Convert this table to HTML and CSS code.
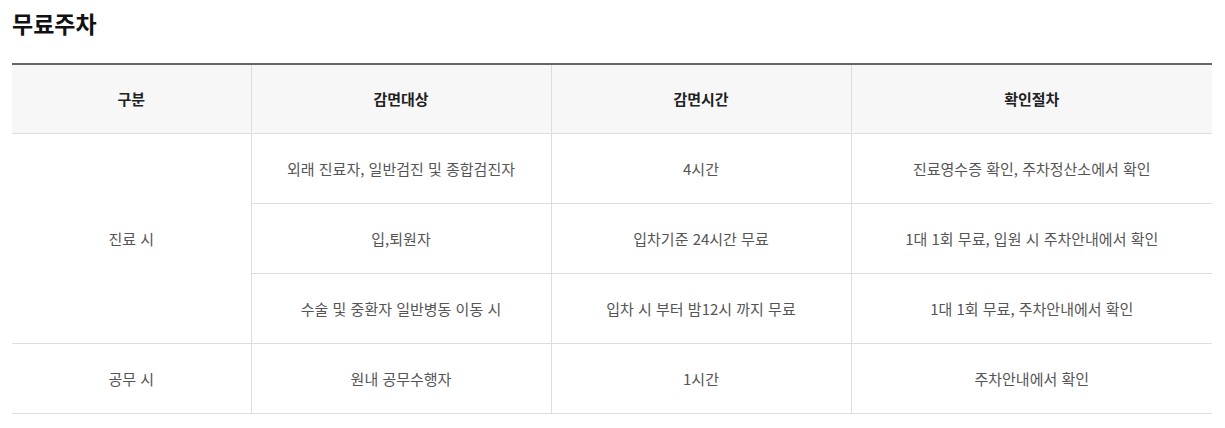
FILE: index.html
```html
<!DOCTYPE html>
<html lang="ko">
<head>
<meta charset="utf-8">
<title>무료주차</title>
<link rel="stylesheet" href="styles.css">
</head>
<body>
<div class="page">
  <h2 class="title">무료주차</h2>
  <table class="park">
    <colgroup>
      <col class="c1"><col class="c2"><col class="c3"><col class="c4">
    </colgroup>
    <thead>
      <tr><th>구분</th><th>감면대상</th><th>감면시간</th><th>확인절차</th></tr>
    </thead>
    <tbody>
      <tr><td rowspan="3" class="first">진료 시</td><td>외래 진료자, 일반검진 및 종합검진자</td><td>4시간</td><td>진료영수증 확인, 주차정산소에서 확인</td></tr>
      <tr><td>입,퇴원자</td><td>입차기준 24시간 무료</td><td>1대 1회 무료, 입원 시 주차안내에서 확인</td></tr>
      <tr><td>수술 및 중환자 일반병동 이동 시</td><td>입차 시 부터 밤12시 까지 무료</td><td>1대 1회 무료, 주차안내에서 확인</td></tr>
      <tr><td class="first">공무 시</td><td>원내 공무수행자</td><td>1시간</td><td>주차안내에서 확인</td></tr>
    </tbody>
  </table>
</div>
</body>
</html>
```

FILE: styles.css
```css
html, body {
  margin: 0;
  padding: 0;
  background: #fff;
}
body {
  font-family: "Noto Sans CJK KR", "Noto Sans", sans-serif;
}
.page {
  padding: 5px 13px 0 12px;
}
.title {
  margin: 0 0 22px;
  font-size: 23px;
  line-height: 36px;
  font-weight: 700;
  color: #111;
}
.park {
  width: 1200px;
  border-collapse: collapse;
  table-layout: fixed;
  border-top: 2px solid #666;
}
.c1 { width: 239px; }
.c2 { width: 300px; }
.c3 { width: 300px; }
.c4 { width: 361px; }
.park th, .park td {
  text-align: center;
  vertical-align: middle;
  font-size: 15px;
  line-height: 20px;
  padding: 0;
  border-bottom: 1px solid #ddd;
  border-left: 1px solid #ddd;
}
.park th {
  height: 68px;
  background: #f7f7f7;
  color: #222;
  font-weight: 700;
}
.park td {
  height: 69px;
  color: #555;
  font-weight: 400;
}
.park th:first-child, .park td.first {
  border-left: 0;
}
```
